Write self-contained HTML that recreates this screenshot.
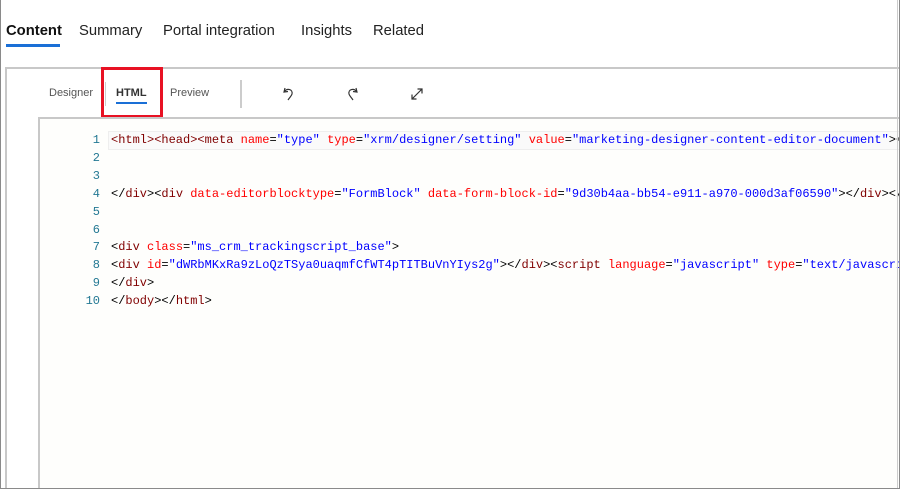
<!DOCTYPE html>
<html style="overflow:hidden"><head><style>
*{margin:0;padding:0;box-sizing:border-box}
html,body{width:900px;height:489px;overflow:hidden}
body{background:#fff;font-family:"Liberation Sans",sans-serif;position:relative}
.frame{position:absolute;left:0;top:0;width:900px;height:489px;border:1px solid #8a8a8a;border-top:none}
.tab{position:absolute;top:23px;font-size:14.8px;color:#222}
.panel{position:absolute;left:5px;top:67px;width:895px;height:422px;border:1px solid #c8c8c8;border-width:2px 0 0 2px}
.sub{position:absolute;top:87px;font-size:11px;color:#555}
.editor{position:absolute;left:38px;top:117px;width:862px;height:372px;border-left:2px solid #c8c8c8;border-top:2px solid #c8c8c8;background:#fefefc;overflow:hidden}
.code{position:absolute;left:0;top:13px;font-family:"Liberation Mono",monospace;font-size:12px;line-height:17.9px;white-space:pre}
.ln{position:absolute;left:0;width:60px;text-align:right;color:#237893}
.tx{position:absolute;left:71px;color:#000}
.t{color:#800000}.a{color:#ff0000}.v{color:#0000ff}
.hl{position:absolute;left:68px;top:12px;width:820px;height:19px;border:1px solid #eee;background:#fafafa}
</style></head><body>
<div class="tab" style="left:6px;font-weight:bold;color:#111">Content</div>
<div style="position:absolute;left:6px;top:44px;width:54px;height:3px;background:#1a6fd6"></div>
<div class="tab" style="left:79px">Summary</div>
<div class="tab" style="left:163px">Portal integration</div>
<div class="tab" style="left:301px">Insights</div>
<div class="tab" style="left:373px">Related</div>
<div class="panel"></div>
<div class="sub" style="left:49px">Designer</div>
<div style="position:absolute;left:105px;top:82px;width:1px;height:24px;background:#ccc"></div>
<div class="sub" style="left:116px;font-weight:bold;color:#333">HTML</div>
<div style="position:absolute;left:116px;top:102px;width:31px;height:2px;background:#1a6fd6"></div>
<div class="sub" style="left:170px">Preview</div>
<div style="position:absolute;left:240px;top:80px;width:2px;height:28px;background:#ccc"></div>
<div style="position:absolute;left:101px;top:67px;width:62px;height:51px;border:3px solid #e81123"></div>
<svg style="position:absolute;left:282px;top:86px" width="14" height="16" viewBox="0 0 14 16" fill="none" stroke="#333" stroke-width="1.2"><path d="M3 2 L2 6 L6 5.5"/><path d="M2.5 5.5 C5 2 11 3 10 8 C9.5 10 8 11 6 14"/></svg>
<svg style="position:absolute;left:346px;top:86px" width="14" height="16" viewBox="0 0 14 16" fill="none" stroke="#333" stroke-width="1.2"><path d="M10 2 L11 6 L7 5.5"/><path d="M10.5 5.5 C8 2 2 3 3 8 C3.5 10 5 11 7 14"/></svg>
<svg style="position:absolute;left:410px;top:87px" width="14" height="14" viewBox="0 0 14 14" fill="none" stroke="#333" stroke-width="1.2"><path d="M2 12 L12 2 M7.5 2 H12 V6.5 M2 7.5 V12 H6.5"/></svg>
<div class="editor">
<div class="hl"></div>
<div class="code">
<div class="ln" style="top:0">1</div><div class="tx" style="top:0"><span class="t">&lt;html&gt;&lt;head&gt;&lt;meta</span> <span class="a">name</span>=<span class="v">"type"</span> <span class="a">type</span>=<span class="v">"xrm/designer/setting"</span> <span class="a">value</span>=<span class="v">"marketing-designer-content-editor-document"</span>&gt;&lt;</div>
<div class="ln" style="top:17.9px">2</div>
<div class="ln" style="top:35.8px">3</div>
<div class="ln" style="top:53.7px">4</div><div class="tx" style="top:53.7px">&lt;/<span class="t">div</span>&gt;&lt;<span class="t">div</span> <span class="a">data-editorblocktype</span>=<span class="v">"FormBlock"</span> <span class="a">data-form-block-id</span>=<span class="v">"9d30b4aa-bb54-e911-a970-000d3af06590"</span>&gt;&lt;/<span class="t">div</span>&gt;&lt;/</div>
<div class="ln" style="top:71.6px">5</div>
<div class="ln" style="top:89.5px">6</div>
<div class="ln" style="top:107.4px">7</div><div class="tx" style="top:107.4px">&lt;<span class="t">div</span> <span class="a">class</span>=<span class="v">"ms_crm_trackingscript_base"</span>&gt;</div>
<div class="ln" style="top:125.3px">8</div><div class="tx" style="top:125.3px">&lt;<span class="t">div</span> <span class="a">id</span>=<span class="v">"dWRbMKxRa9zLoQzTSya0uaqmfCfWT4pTITBuVnYIys2g"</span>&gt;&lt;/<span class="t">div</span>&gt;&lt;<span class="t">script</span> <span class="a">language</span>=<span class="v">"javascript"</span> <span class="a">type</span>=<span class="v">"text/javascript"</span></div>
<div class="ln" style="top:143.2px">9</div><div class="tx" style="top:143.2px">&lt;/<span class="t">div</span>&gt;</div>
<div class="ln" style="top:161.1px">10</div><div class="tx" style="top:161.1px">&lt;/<span class="t">body</span>&gt;&lt;/<span class="t">html</span>&gt;</div>
</div>
</div>
<div style="position:absolute;left:897px;top:0;width:1px;height:489px;background:#ccc"></div>
<div class="frame"></div>
</body></html>
